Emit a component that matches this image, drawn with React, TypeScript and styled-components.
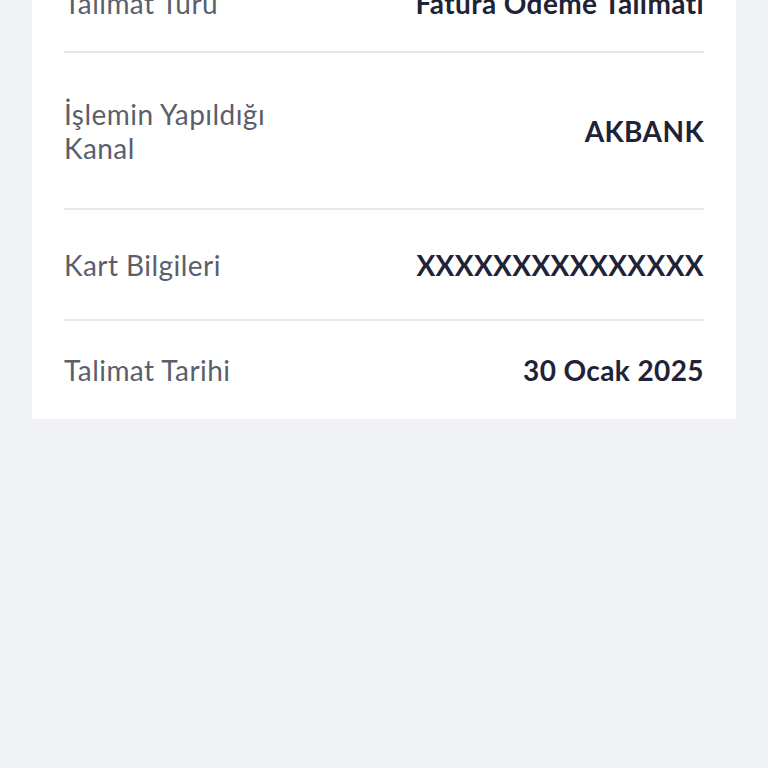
import React from "react";
import styled, { createGlobalStyle } from "styled-components";

const GlobalStyle = createGlobalStyle`
  html, body {
    margin: 0;
    padding: 0;
    background: #f0f2f6;
    overflow: hidden;
  }
  body {
    font-family: "Lato", "Noto Sans", sans-serif;
  }
`;

const Page = styled.div`
  width: 768px;
  height: 768px;
  box-sizing: border-box;
  padding: 0 32px;
  overflow: hidden;
`;

const Card = styled.div`
  margin-top: -46px;
  background: #ffffff;
  padding: 0 32px;
  display: flex;
  flex-direction: column;
`;

const Row = styled.div<{ $pad: number; $last?: boolean }>`
  display: flex;
  align-items: center;
  justify-content: space-between;
  gap: 24px;
  padding: ${(p) => p.$pad}px 0;
  border-bottom: ${(p) => (p.$last ? "none" : "2px solid #e6e8ee")};
`;

const Label = styled.div`
  max-width: 250px;
  font-size: 28px;
  line-height: 34px;
  letter-spacing: 0.45px;
  color: #5a5f6e;
  font-weight: 400;
`;

const Value = styled.div`
  font-size: 28px;
  line-height: 34px;
  letter-spacing: 0.4px;
  color: #1f2337;
  font-weight: 700;
  text-align: right;
  white-space: nowrap;
`;

const rows = [
  { label: "Talimat Türü", value: "Fatura Ödeme Talimatı", pad: 31.5 },
  { label: "İşlemin Yapıldığı Kanal", value: "AKBANK", pad: 43.5 },
  { label: "Kart Bilgileri", value: "XXXXXXXXXXXXXXX", pad: 37.5 },
  { label: "Talimat Tarihi", value: "30 Ocak 2025", pad: 32 },
];

export default function App() {
  return (
    <>
      <GlobalStyle />
      <Page>
        <Card>
          {rows.map((r, i) => (
            <Row key={r.label} $pad={r.pad} $last={i === rows.length - 1}>
              <Label>{r.label}</Label>
              <Value>{r.value}</Value>
            </Row>
          ))}
        </Card>
      </Page>
    </>
  );
}
